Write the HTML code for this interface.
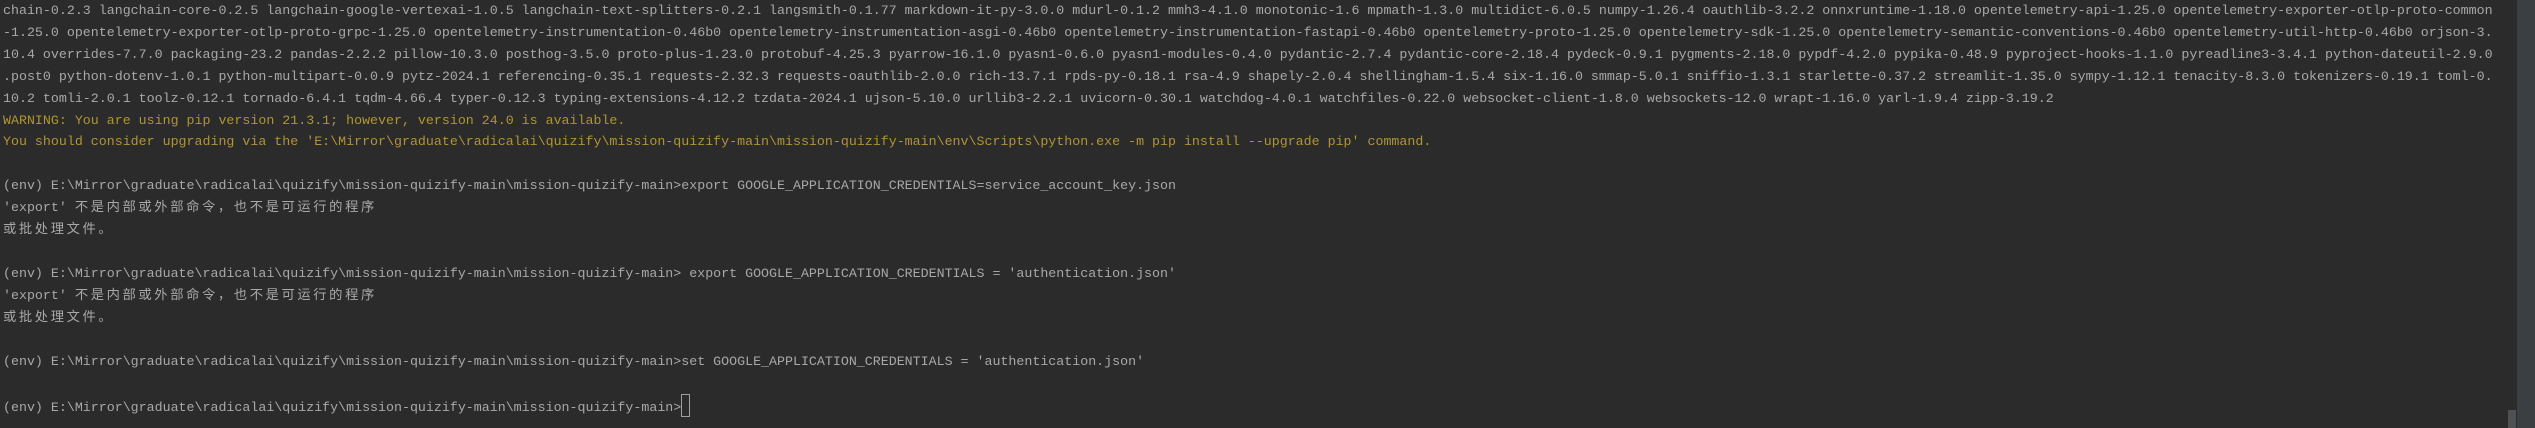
<!DOCTYPE html>
<html><head><meta charset="utf-8"><style>
html,body{margin:0;padding:0;width:2535px;height:428px;overflow:hidden;background:#2b2b2b;}
.sb{position:absolute;left:2517px;top:0;width:18px;height:428px;background:#3c3f41;}
.th{position:absolute;left:2508px;top:410px;width:8px;height:18px;background:#4e5052;}
.t{position:absolute;left:3px;top:0px;font-family:"Liberation Mono","Noto Sans CJK SC",monospace;font-size:13.3px;line-height:21.9px;color:#a8a8a8;white-space:pre;}
.w{color:#b09530;}
.c{letter-spacing:2.6px;}
.cur{display:inline-block;width:9px;height:23px;border:1px solid #a0a0a0;box-sizing:border-box;vertical-align:-6px;}
</style></head><body>
<div class="t">chain-0.2.3 langchain-core-0.2.5 langchain-google-vertexai-1.0.5 langchain-text-splitters-0.2.1 langsmith-0.1.77 markdown-it-py-3.0.0 mdurl-0.1.2 mmh3-4.1.0 monotonic-1.6 mpmath-1.3.0 multidict-6.0.5 numpy-1.26.4 oauthlib-3.2.2 onnxruntime-1.18.0 opentelemetry-api-1.25.0 opentelemetry-exporter-otlp-proto-common
-1.25.0 opentelemetry-exporter-otlp-proto-grpc-1.25.0 opentelemetry-instrumentation-0.46b0 opentelemetry-instrumentation-asgi-0.46b0 opentelemetry-instrumentation-fastapi-0.46b0 opentelemetry-proto-1.25.0 opentelemetry-sdk-1.25.0 opentelemetry-semantic-conventions-0.46b0 opentelemetry-util-http-0.46b0 orjson-3.
10.4 overrides-7.7.0 packaging-23.2 pandas-2.2.2 pillow-10.3.0 posthog-3.5.0 proto-plus-1.23.0 protobuf-4.25.3 pyarrow-16.1.0 pyasn1-0.6.0 pyasn1-modules-0.4.0 pydantic-2.7.4 pydantic-core-2.18.4 pydeck-0.9.1 pygments-2.18.0 pypdf-4.2.0 pypika-0.48.9 pyproject-hooks-1.1.0 pyreadline3-3.4.1 python-dateutil-2.9.0
.post0 python-dotenv-1.0.1 python-multipart-0.0.9 pytz-2024.1 referencing-0.35.1 requests-2.32.3 requests-oauthlib-2.0.0 rich-13.7.1 rpds-py-0.18.1 rsa-4.9 shapely-2.0.4 shellingham-1.5.4 six-1.16.0 smmap-5.0.1 sniffio-1.3.1 starlette-0.37.2 streamlit-1.35.0 sympy-1.12.1 tenacity-8.3.0 tokenizers-0.19.1 toml-0.
10.2 tomli-2.0.1 toolz-0.12.1 tornado-6.4.1 tqdm-4.66.4 typer-0.12.3 typing-extensions-4.12.2 tzdata-2024.1 ujson-5.10.0 urllib3-2.2.1 uvicorn-0.30.1 watchdog-4.0.1 watchfiles-0.22.0 websocket-client-1.8.0 websockets-12.0 wrapt-1.16.0 yarl-1.9.4 zipp-3.19.2
<span class="w">WARNING: You are using pip version 21.3.1; however, version 24.0 is available.</span>
<span class="w">You should consider upgrading via the 'E:\Mirror\graduate\radicalai\quizify\mission-quizify-main\mission-quizify-main\env\Scripts\python.exe -m pip install --upgrade pip' command.</span>

(env) E:\Mirror\graduate\radicalai\quizify\mission-quizify-main\mission-quizify-main&gt;export GOOGLE_APPLICATION_CREDENTIALS=service_account_key.json
'export' <span class="c">不是内部或外部命令，也不是可运行的程序</span>
<span class="c">或批处理文件。</span>

(env) E:\Mirror\graduate\radicalai\quizify\mission-quizify-main\mission-quizify-main&gt; export GOOGLE_APPLICATION_CREDENTIALS = 'authentication.json'
'export' <span class="c">不是内部或外部命令，也不是可运行的程序</span>
<span class="c">或批处理文件。</span>

(env) E:\Mirror\graduate\radicalai\quizify\mission-quizify-main\mission-quizify-main&gt;set GOOGLE_APPLICATION_CREDENTIALS = 'authentication.json'

(env) E:\Mirror\graduate\radicalai\quizify\mission-quizify-main\mission-quizify-main&gt;<span class="cur"></span></div>
<div class="sb"></div><div class="th"></div>
</body></html>
